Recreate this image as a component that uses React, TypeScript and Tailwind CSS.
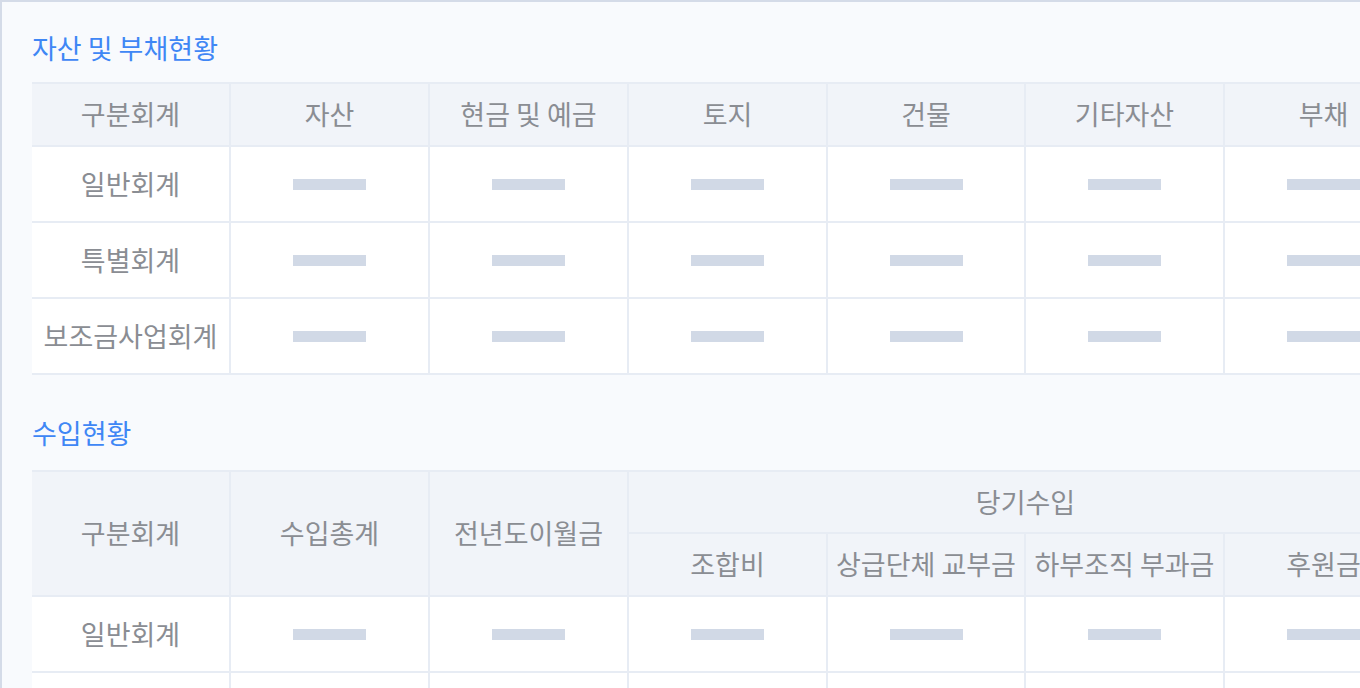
const font = { fontFamily: '"Noto Sans CJK KR", "Noto Sans", sans-serif' };

const assetCols = ['자산', '현금 및 예금', '토지', '건물', '기타자산', '부채', '순자산'];
const assetRows = ['일반회계', '특별회계', '보조금사업회계'];

const incomeSub = ['조합비', '상급단체 교부금', '하부조직 부과금', '후원금'];
const incomeRows = ['일반회계', '특별회계'];

// column widths measured from the reference grid lines
const colW = ['w-[198px]', 'w-[199px]', 'w-[199px]', 'w-[199px]', 'w-[198px]', 'w-[199px]', 'w-[199px]', 'w-[199px]'];

function Cols() {
  return (
    <colgroup>
      {colW.map((w, i) => (
        <col key={i} className={w} />
      ))}
    </colgroup>
  );
}

function Dash() {
  return <span className="mx-auto block h-[11px] w-[73px] bg-[#d1d9e6]" />;
}

function Title({ children }: { children: string }) {
  return <h2 className="text-[27px] font-normal leading-8 text-[#3f87f5]">{children}</h2>;
}

const th = 'border-b-2 border-l-2 border-[#e7ecf4] bg-[#f1f4f9] text-center align-middle font-normal text-[#8a8d93] first:border-l-0';
const td = 'h-[76px] border-b-2 border-l-2 border-[#e7ecf4] bg-white text-center align-middle text-[#8a8d93] first:border-l-0';

export default function App() {
  return (
    <div className="h-[688px] w-[1360px] overflow-hidden border-l-2 border-t-2 border-[#d4dbe8] bg-[#f8fafd]" style={font}>
      <div className="pl-[30px] pt-[30px]">
        <Title>자산 및 부채현황</Title>

        <table className="mt-[18px] w-[1590px] table-fixed border-collapse border-t-2 border-[#e7ecf4] text-[27px]">
          <Cols />
          <thead>
            <tr>
              <th className={th + ' h-[63px]'}>구분회계</th>
              {assetCols.map((c) => (
                <th key={c} className={th + ' h-[63px]'}>{c}</th>
              ))}
            </tr>
          </thead>
          <tbody>
            {assetRows.map((r) => (
              <tr key={r}>
                <td className={td + ' whitespace-nowrap'}>{r}</td>
                {assetCols.map((c) => (
                  <td key={c} className={td}><Dash /></td>
                ))}
              </tr>
            ))}
          </tbody>
        </table>

        <div className="mt-[42px]">
          <Title>수입현황</Title>
        </div>

        <table className="mt-[21px] w-[1590px] table-fixed border-collapse border-t-2 border-[#e7ecf4] text-[27px]">
          <Cols />
          <thead>
            <tr>
              <th rowSpan={2} className={th}>구분회계</th>
              <th rowSpan={2} className={th}>수입총계</th>
              <th rowSpan={2} className={th + ' whitespace-nowrap'}>전년도이월금</th>
              <th colSpan={4} className={th + ' h-[62px]'}>당기수입</th>
              <th rowSpan={2} className={th}>기타수입</th>
            </tr>
            <tr>
              {incomeSub.map((c) => (
                <th key={c} className={th + ' h-[63px] whitespace-nowrap !border-l-2'}>{c}</th>
              ))}
            </tr>
          </thead>
          <tbody>
            {incomeRows.map((r) => (
              <tr key={r}>
                <td className={td}>{r}</td>
                {Array.from({ length: 7 }).map((_, i) => (
                  <td key={i} className={td}><Dash /></td>
                ))}
              </tr>
            ))}
          </tbody>
        </table>
      </div>
    </div>
  );
}
